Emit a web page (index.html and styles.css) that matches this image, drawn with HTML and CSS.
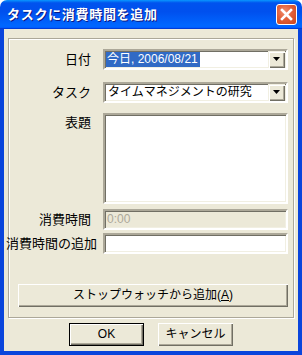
FILE: index.html
```html
<!DOCTYPE html>
<html lang="ja">
<head>
<meta charset="utf-8">
<link rel="stylesheet" href="styles.css">
</head>
<body>
<div class="window">
  <div class="titlebar">
    <span class="title">タスクに消費時間を追加</span>
    <span class="close">
      <svg width="13" height="13" viewBox="0 0 13 13"><path d="M2 2 L11 11 M11 2 L2 11" stroke="#fff" stroke-width="2.6" stroke-linecap="square"/></svg>
    </span>
  </div>
  <div class="client">
    <div class="group">
      <div class="row r1">
        <span class="lbl">日付</span>
        <div class="combo">
          <span class="value"><span class="sel">今日, 2006/08/21</span></span>
          <span class="drop"><svg width="7" height="4" viewBox="0 0 7 4"><path d="M0 0H7L3.5 4Z" fill="#000"/></svg></span>
        </div>
      </div>
      <div class="row r2">
        <span class="lbl">タスク</span>
        <div class="combo">
          <span class="value plain">タイムマネジメントの研究</span>
          <span class="drop"><svg width="7" height="4" viewBox="0 0 7 4"><path d="M0 0H7L3.5 4Z" fill="#000"/></svg></span>
        </div>
      </div>
      <div class="row r3">
        <span class="lbl top">表題</span>
        <div class="field area"></div>
      </div>
      <div class="row r4">
        <span class="lbl">消費時間</span>
        <div class="field disabled">0:00</div>
      </div>
      <div class="row r5">
        <span class="lbl long">消費時間の追加</span>
        <div class="field"></div>
      </div>
      <div class="btn wide">ストップウォッチから追加(<u>A</u>)</div>
    </div>
    <div class="actions">
      <div class="btn default">OK</div>
      <div class="btn">キャンセル</div>
    </div>
  </div>
</div>
</body>
</html>
```
FILE: styles.css
```css
* { box-sizing: border-box; }
html, body { margin: 0; padding: 0; background: #ffffff; }
body {
  font-family: "Liberation Sans", "Noto Sans CJK JP", sans-serif;
  font-size: 12px;
  color: #000;
}
.window {
  width: 302px;
  height: 355px;
  display: flex;
  flex-direction: column;
  border-radius: 7px 7px 0 0;
  overflow: hidden;
}
.titlebar {
  height: 29px;
  flex: none;
  display: flex;
  align-items: center;
  justify-content: space-between;
  padding: 0 5px 0 7px;
  background: linear-gradient(to bottom, #0997ff 0%, #0053ee 10%, #0050ee 40%, #0066ff 86%, #0066ff 92%, #005bff 95%, #003dd7 97%, #003dd7 100%);
}
.title {
  color: #fff;
  font-weight: bold;
  font-size: 13px;
  letter-spacing: 0.7px;
  line-height: 16px;
  text-shadow: 1px 1px 0 #0a1883;
}
.close {
  width: 21px;
  height: 21px;
  border: 1px solid #fff;
  border-radius: 3px;
  display: flex;
  align-items: center;
  justify-content: center;
  background: radial-gradient(circle at 40% 35%, #f09070 0%, #e2603a 45%, #cc4418 100%);
}
.client {
  flex: 1;
  background: #ece9d8;
  border: 4px solid #0a45dc;
  border-top: none;
  padding: 9px 4px 0 4px;
  display: flex;
  flex-direction: column;
}
.group {
  height: 280px;
  border: 1px solid #aca899;
  box-shadow: inset 1px 1px 0 #fff, 1px 1px 0 #fff;
  padding: 10px 5px 0 0;
  display: flex;
  flex-direction: column;
}
.row {
  display: flex;
  align-items: center;
}
.r2 { margin-top: 12px; }
.r3 { margin-top: 10px; align-items: flex-start; }
.r4 { margin-top: 5px; }
.r5 { margin-top: 3px; }
.lbl {
  flex: none;
  width: 94px;
  padding-right: 12px;
  text-align: right;
  white-space: nowrap;
  font-size: 13px;
  line-height: 21px;
}
.lbl.top { line-height: 18px; padding-top: 1px; }
.lbl.long {
  width: 102px;
  margin-left: -8px;
  padding-right: 6px;
}
.combo, .field {
  flex: 1;
  height: 21px;
  border: 2px solid;
  border-color: #aca899 #fff #fff #aca899;
  box-shadow: inset 1px 1px 0 #716f64, inset -1px -1px 0 #f1efe2;
  background: #fff;
}
.combo {
  display: flex;
  align-items: center;
  padding: 0 1px 0 1px;
}
.value {
  flex: 1;
  font-size: 12px;
  line-height: 15px;
  white-space: nowrap;
  overflow: hidden;
}
.value.plain { padding-left: 2px; }
.sel {
  display: inline-block;
  background: #316ac5;
  color: #fff;
  padding: 0 2px 0 1px;
}
.drop {
  width: 17px;
  height: 17px;
  flex: none;
  background: #ece9d8;
  box-shadow: inset 1px 1px 0 #f1efe2, inset 2px 2px 0 #fff, inset -1px -1px 0 #716f64, inset -2px -2px 0 #aca899;
  display: flex;
  align-items: center;
  justify-content: center;
  padding-bottom: 1px;
}
.field.area { height: 91px; }
.field.disabled {
  background: #ece9d8;
  color: #aca899;
  line-height: 17px;
  padding-left: 2px;
}
.btn {
  height: 23px;
  background: #ece9d8;
  box-shadow: inset 1px 1px 0 #fff, inset -1px -1px 0 #716f64, inset -2px -2px 0 #aca899;
  display: flex;
  align-items: center;
  justify-content: center;
  line-height: 15px;
  white-space: nowrap;
}
.btn.wide {
  margin: 30px 0 0 9px;
}
.actions {
  margin-top: 5px;
  display: flex;
  justify-content: center;
  gap: 14px;
}
.actions .btn { width: 75px; }
.btn.default {
  border: 1px solid #000;
}
```
